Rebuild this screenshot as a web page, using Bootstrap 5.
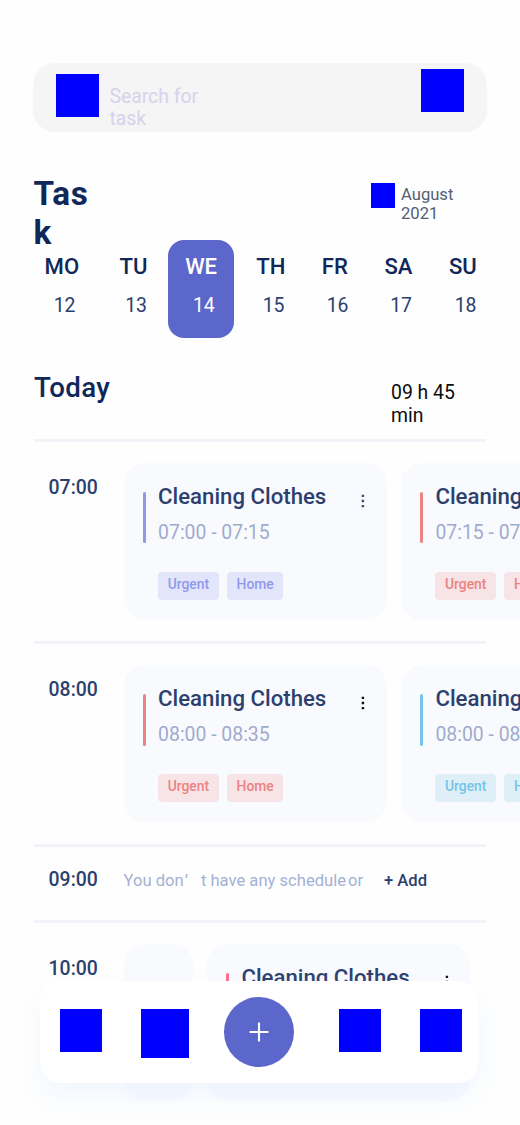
<!DOCTYPE html>
<html lang="en">
<head>
<meta charset="utf-8">
<meta name="viewport" content="width=device-width, initial-scale=1">
<title>Task</title>
<link href="https://cdn.jsdelivr.net/npm/bootstrap@5.3.0/dist/css/bootstrap.min.css" rel="stylesheet">
<style>
body { font-family: Roboto, "Liberation Sans", sans-serif; line-height: 1.172; color: #10275a; background: #fefefe; }
.screen { width: 520px; height: 1125px; padding-top: 62.5px; }
.fw-mid { font-weight: 500; }
.ph { background: #00f; width: 42px; height: 43px; }
.search { margin: 0 33.5px 0 33.4px; height: 69px; border-radius: 22px; background: #f5f5f5; padding: 0 22.5px; }
.search .ph { width: 43px; }
.search-text { font-size: 19.4px; line-height: 22.7px; color: #d4d3eb; width: 110px; margin: 23.1px auto 0 10.5px; }
.heading { height: 108px; padding: 42.4px 34px 0 33.5px; }
.heading h1 { font-size: 33.3px; line-height: 39px; width: 62px; letter-spacing: .6px; }
.month { font-size: 16.6px; line-height: 19.5px; color: #525f77; width: 85px; padding-top: 10.9px; }
.week { display: grid; grid-template-columns: 74px 69px 66.5px 73px 55px 72px 57px; margin-left: 24.9px; height: 98.5px; }
.day { padding-top: 13.6px; font-size: 22.1px; line-height: 26px; border-radius: 16px; }
.day .num { font-size: 19.4px; line-height: 23px; padding: 14.9px 0 0 5.4px; color: #2c406e; }
.day.active, .day.active .num { background: #5b67ca; color: #fff; }
.today { height: 101px; padding: 34.2px 34px 0; }
.today h2 { font-size: 27.7px; line-height: 32.5px; letter-spacing: .3px; }
.free { font-size: 19.4px; line-height: 22.7px; color: #0c0c0c; width: 95px; padding-top: 10.2px; }
.slot { position: relative; height: 202.4px; padding: 23.5px 0 0 123.6px; }
.slot::before { content: ""; position: absolute; left: 34px; width: 452px; top: 0; height: 2.8px; background: #f2f3f9; }
.hour { position: absolute; left: 48.6px; top: 36.6px; font-size: 19.4px; line-height: 23px; color: #2c406e; }
.empty-slot { height: 76.3px; }
.task { flex: none; width: 263.5px; height: 157.5px; border-radius: 21px; background: #f9fafe; padding: 20.4px 19px 0; }
.stub { width: 69.5px; }
.rule { width: 3px; height: 51.5px; border-radius: 1.5px; margin-top: 8.8px; background: var(--tone); }
.title { font-size: 22.2px; line-height: 26px; color: #2c406e; white-space: nowrap; }
.when { font-size: 19.4px; line-height: 23px; color: #9fabcd; margin-top: 11.8px; }
.tags { margin-top: 28px; gap: 8.3px; }
.chip { height: 28px; border-radius: 4px; font-size: 13.85px; line-height: 25.2px; padding: 0 9.6px; color: var(--tone); background: var(--tint); }
.violet { --tone: #8f99eb; --tint: #e3e6fa; }
.coral { --tone: #ee8282; --tint: #f6e4e7; }
.sky { --tone: #75c5e7; --tint: #deeff8; }
.pink { --tone: #ff6d8a; --tint: #f6e4e7; }
.dots { width: 4px; height: 14px; margin: 11px 2.9px 0 auto; color: #3c4c73; }
.none { font-size: 16.6px; line-height: 20px; color: #a3b1d5; padding-top: 3.6px; white-space: pre; }
.none .quote { width: 17.2px; padding-left: 1px; display: inline-block; }
.none .add { color: #2c406e; margin-left: 20.8px; }
.dock { position: absolute; left: 39.8px; top: 980.8px; width: 438.6px; height: 102.4px; border-radius: 20px; background: #fff; box-shadow: 0 14px 28px rgba(205, 228, 255, .26); display: grid; grid-template-columns: 81px 83.5px 114.5px 81px 42px; padding: 28px 0 0 20px; }
.dock .wide { width: 48px; height: 49px; }
.plus { width: 69.5px; height: 69.5px; margin: -11.4px 0 0 .2px; background: #5b67ca; }
</style>
</head>
<body>
<main class="screen position-relative overflow-hidden">
  <div class="search d-flex">
    <div class="ph" style="margin-top:11.5px"></div>
    <div class="search-text">Search for<br>task</div>
    <div class="ph" style="margin-top:6.5px"></div>
  </div>
  <header class="heading d-flex">
    <h1 class="fw-bold m-0 me-auto">Tas<br>k</h1>
    <div class="ph" style="width:24px;height:25px;margin-top:9.1px;margin-right:6px"></div>
    <div class="month">August<br>2021</div>
  </header>
  <section class="week text-center fw-mid">
    <div class="day">MO<div class="num fw-normal">12</div></div>
    <div class="day">TU<div class="num fw-normal">13</div></div>
    <div class="day active">WE<div class="num fw-normal">14</div></div>
    <div class="day">TH<div class="num fw-normal">15</div></div>
    <div class="day">FR<div class="num fw-normal">16</div></div>
    <div class="day">SA<div class="num fw-normal">17</div></div>
    <div class="day">SU<div class="num fw-normal">18</div></div>
  </section>
  <div class="today d-flex justify-content-between">
    <h2 class="fw-mid m-0">Today</h2>
    <div class="free">09 h 45<br>min</div>
  </div>

  <section class="slot">
    <div class="hour fw-mid">07:00</div>
    <div class="d-flex" style="gap:13.8px">
      <article class="task violet d-flex align-items-start">
        <div class="rule"></div>
        <div style="margin-left:12.5px">
          <div class="title fw-mid">Cleaning Clothes</div><div class="when">07:00 - 07:15</div>
          <div class="tags d-flex fw-mid"><span class="chip">Urgent</span><span class="chip">Home</span></div>
        </div>
        <svg class="dots" viewBox="0 0 4 14" fill="currentColor"><path d="M.7.7h2.4v2.4H.7zM.7 5.8h2.4v2.4H.7zM.7 10.9h2.4v2.4H.7z"/></svg>
      </article>
      <article class="task coral d-flex align-items-start">
        <div class="rule"></div>
        <div style="margin-left:12.5px">
          <div class="title fw-mid">Cleaning Clothes</div><div class="when">07:15 - 07:45</div>
          <div class="tags d-flex fw-mid"><span class="chip">Urgent</span><span class="chip">Home</span></div>
        </div>
      </article>
    </div>
  </section>
  <section class="slot">
    <div class="hour fw-mid">08:00</div>
    <div class="d-flex" style="gap:13.8px">
      <article class="task coral d-flex align-items-start">
        <div class="rule"></div>
        <div style="margin-left:12.5px">
          <div class="title fw-mid">Cleaning Clothes</div><div class="when">08:00 - 08:35</div>
          <div class="tags d-flex fw-mid"><span class="chip">Urgent</span><span class="chip">Home</span></div>
        </div>
        <svg class="dots" style="color:#111" viewBox="0 0 4 14" fill="currentColor"><path d="M.7.7h2.4v2.4H.7zM.7 5.8h2.4v2.4H.7zM.7 10.9h2.4v2.4H.7z"/></svg>
      </article>
      <article class="task sky d-flex align-items-start">
        <div class="rule"></div>
        <div style="margin-left:12.5px">
          <div class="title fw-mid">Cleaning Clothes</div><div class="when">08:00 - 08:35</div>
          <div class="tags d-flex fw-mid"><span class="chip">Urgent</span><span class="chip">Home</span></div>
        </div>
      </article>
    </div>
  </section>
  <section class="slot empty-slot">
    <div class="hour fw-mid" style="top:24px">09:00</div>
    <div class="none d-flex"><span>You don</span><span class="quote">’</span><span>t have any schedule</span><span style="margin-left:2px">or</span><span class="add fw-mid">+ Add</span></div>
  </section>
  <section class="slot">
    <div class="hour fw-mid">10:00</div>
    <div class="d-flex" style="gap:13.8px">
      <div class="task stub"></div>
      <article class="task pink d-flex align-items-start">
        <div class="rule"></div>
        <div style="margin-left:12.5px"><div class="title fw-mid">Cleaning Clothes</div></div>
        <svg class="dots" style="color:#111" viewBox="0 0 4 14" fill="currentColor"><path d="M.7.7h2.4v2.4H.7zM.7 5.8h2.4v2.4H.7zM.7 10.9h2.4v2.4H.7z"/></svg>
      </article>
    </div>
  </section>

  <nav class="dock">
    <div class="ph"></div>
    <div class="ph wide"></div>
    <div class="plus rounded-circle d-flex align-items-center justify-content-center">
      <svg width="20" height="20" viewBox="0 0 20 20" stroke="#fff" stroke-width="2.1"><path d="M10 .5v19M.5 10h19"/></svg>
    </div>
    <div class="ph"></div>
    <div class="ph"></div>
  </nav>
</main>
<script src="https://cdn.jsdelivr.net/npm/bootstrap@5.3.0/dist/js/bootstrap.bundle.min.js"></script>
</body>
</html>
